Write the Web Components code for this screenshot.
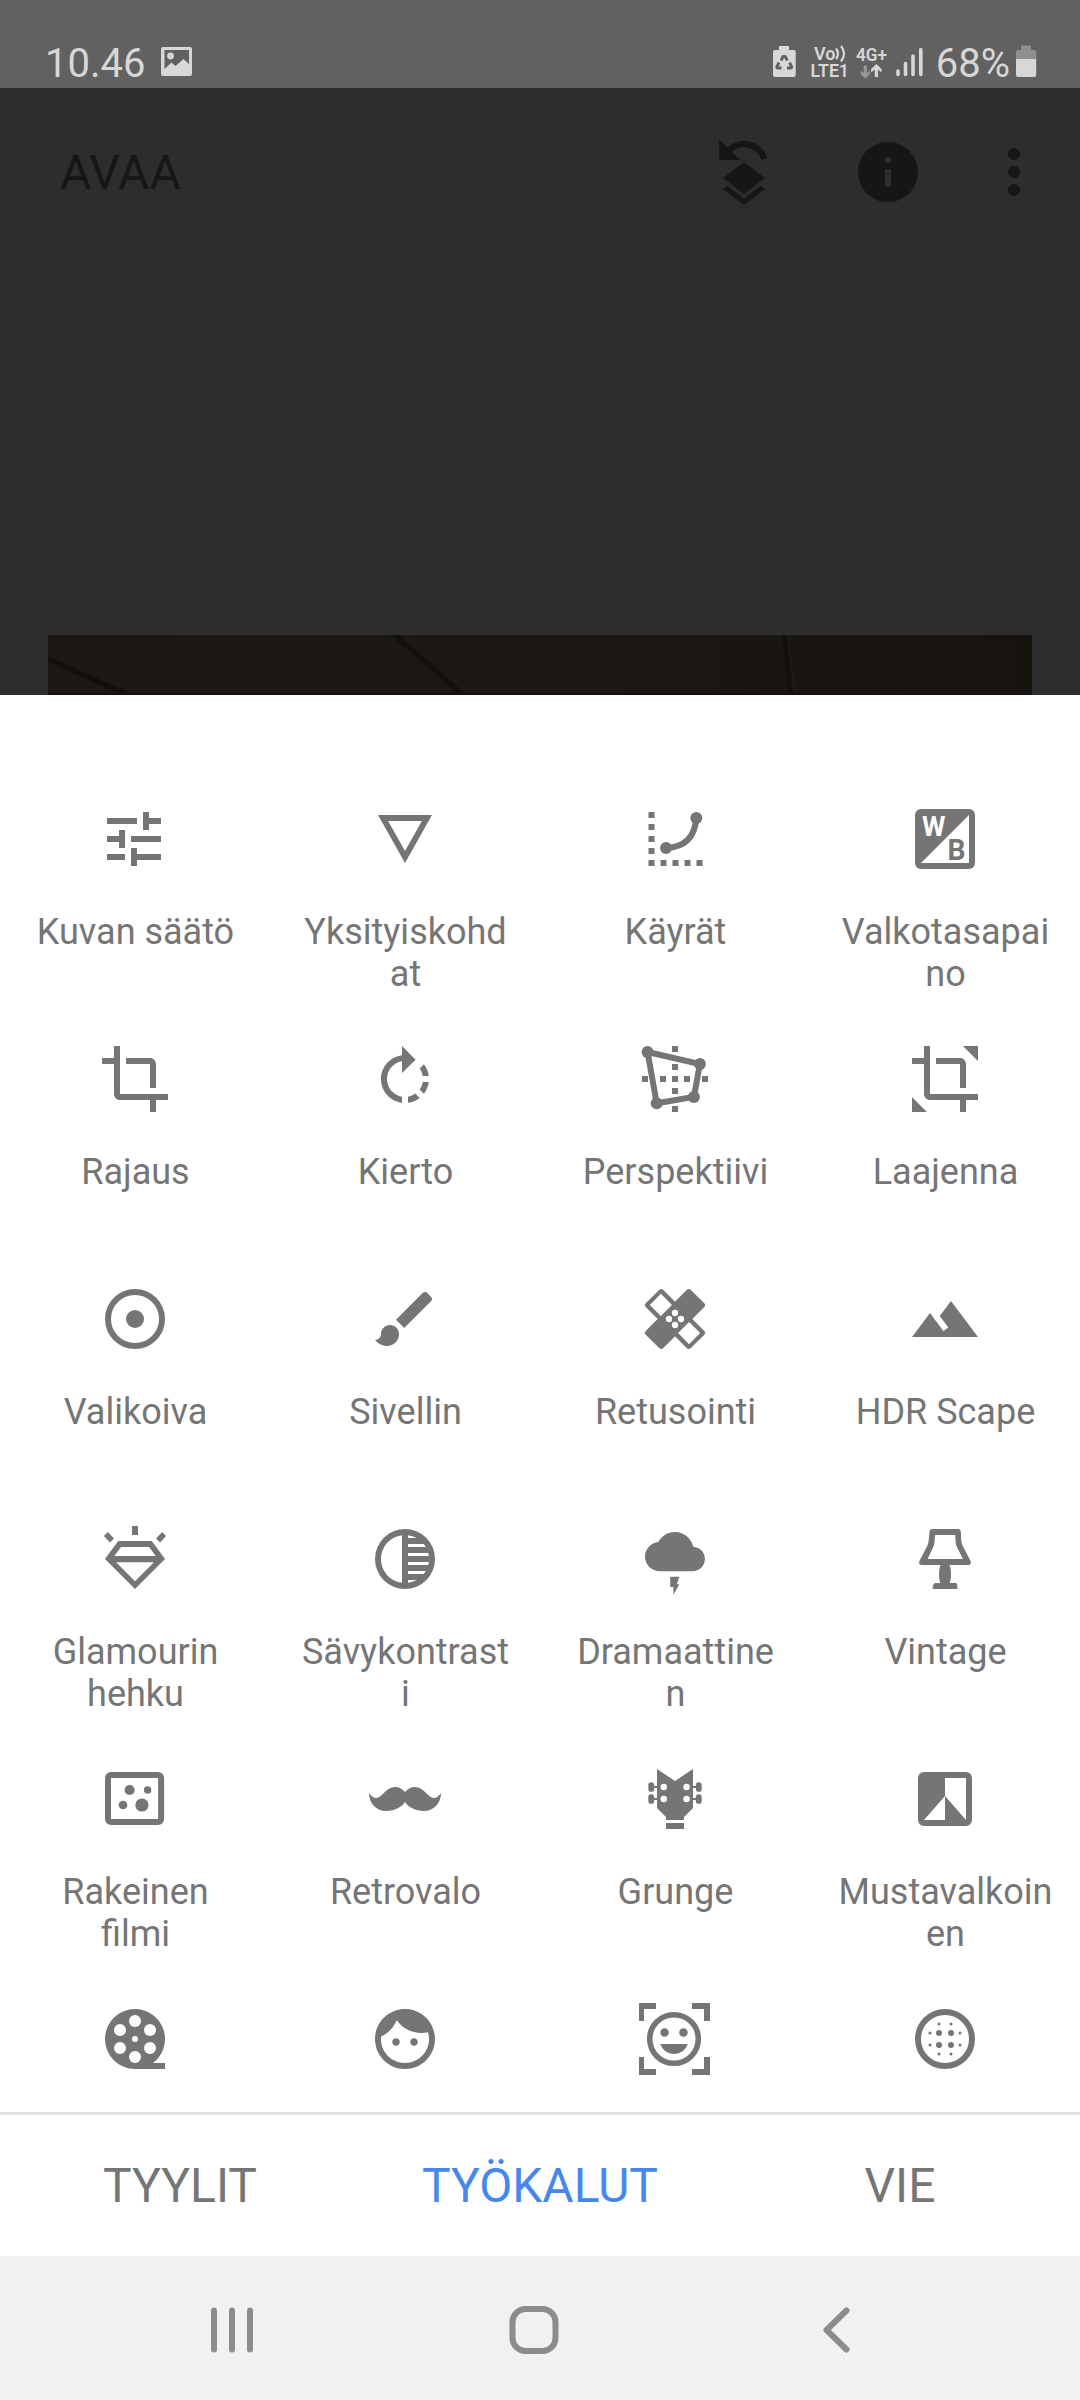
<!DOCTYPE html>
<html lang="fi">
<head>
<meta charset="utf-8">
<title>Työkalut</title>
<style>
html,body{margin:0;padding:0}
body{width:1080px;height:2400px;overflow:hidden;background:#2d2d2d;font-family:Roboto,"Noto Sans",sans-serif}
</style>
</head>
<body>
<editor-screen></editor-screen>
<script>
const define = (name, css, html) => customElements.define(name, class extends HTMLElement {
  constructor() {
    super();
    this.attachShadow({ mode: 'open' }).innerHTML = `<style>${css}</style>${html}`;
  }
});

const CROP = '<path d="M17 15h2V7c0-1.1-.9-2-2-2H9v2h8v8zM7 17V1H5v4H1v2h4v10c0 1.1.9 2 2 2h10v4h2v-4h4v-2H7z"/>';
const dots = (list, r) => list.map(([x, y]) => `<circle cx="${x}" cy="${y}" r="${r}"/>`).join('');
const squares = list => list.map(([x, y]) => `<rect x="${x}" y="${y}" width="2" height="2"/>`).join('');

const ICONS = {
  tune: '<path transform="translate(-.33 0)" d="M3 17v2h6v-2H3zM3 5v2h10V5H3zm10 16v-2h8v-2h-8v-2h-2v6h2zM7 9v2H3v2h4v2h2V9H7zm14 4v-2H11v2h10zm-6-4h2V7h4V5h-4V3h-2v6z"/>',
  details: '<path d="M3 4l9 16 9-16H3zm3.38 2h11.25L12 16 6.38 6z"/>',
  curves: '<g transform="translate(.17 0)">' + squares([[3,3],[3,7],[3,11],[3,15],[3,19],[7,19],[11,19],[15,19],[19,19]]) + '</g>' + dots([[19.1,5],[9,15]], 2) + '<path d="M9 15Q18.4 14.6 19.1 5" fill="none" stroke="currentColor" stroke-width="2"/>',
  wb: '<rect x="2" y="2" width="20" height="20" rx="2"/><path d="M20 4v16H4z" fill="#fff"/><text x="4.3" y="11" font-size="9.1" font-weight="700" textLength="7.8" lengthAdjust="spacingAndGlyphs" fill="#fff">W</text><text x="12.8" y="19" font-size="9.8" font-weight="700" textLength="6" lengthAdjust="spacingAndGlyphs">B</text>',
  crop: CROP,
  rotate: '<path d="M15.55 5.55L11 1v3.07C7.06 4.56 4 7.92 4 12s3.05 7.44 7 7.93v-2.02c-2.84-.48-5-2.94-5-5.91s2.16-5.43 5-5.91V10l4.55-4.45zM19.93 11c-.17-1.39-.72-2.73-1.62-3.89l-1.42 1.42c.54.75.88 1.6 1.02 2.47h2.02zM13 17.9v2.02c1.39-.17 2.74-.71 3.9-1.61l-1.44-1.44c-.75.54-1.59.89-2.46 1.03zm3.89-2.42l1.42 1.41c.9-1.16 1.45-2.5 1.62-3.89h-2.02c-.14.87-.48 1.72-1.02 2.48z"/>',
  perspective: squares([[11,1],[11,7],[11,11],[11,15],[11,21],[1,11],[7,11],[15,11],[21,11]]) + dots([[2.85,3],[20.3,7],[18.3,18],[5.9,20.1]], 2) + '<path d="M2.85 3L20.3 7 18.3 18 5.9 20.1z" fill="none" stroke="currentColor" stroke-width="2"/>',
  expand: CROP + '<path d="M18 1h5v5zM1 18l5 5H1z"/>',
  selective: '<circle cx="12" cy="12" r="9" fill="none" stroke="currentColor" stroke-width="2"/><circle cx="12" cy="12" r="3"/>',
  brush: '<path d="M7 14c-1.66 0-3 1.34-3 3 0 1.31-1.16 2-2 2 .92 1.22 2.49 2 4 2 2.21 0 4-1.79 4-4 0-1.66-1.34-3-3-3zm13.71-9.37l-1.34-1.34c-.39-.39-1.02-.39-1.41 0L9 12.25 11.75 15l8.96-8.96c.39-.39.39-1.02 0-1.41z"/>',
  healing: '<g transform="rotate(45 12 12)"><rect x="1.4" y="7.9" width="21.2" height="8.2" rx="1"/><rect x="7.9" y="1.4" width="8.2" height="21.2" rx="1"/><path d="M2.75 9.4h5.2v5.2h-5.2zM16.05 9.4h5.2v5.2h-5.2z" fill="#fff"/></g><g fill="#fff">' + dots([[12,10],[10,12],[14,12],[12,14]], 1.05) + '</g>',
  hdr: '<path d="M14 6l-3.75 5 2.85 3.8-1.6 1.2C9.81 13.75 7 10 7 10l-6 8h22L14 6z"/>',
  glamour: '<path fill-rule="evenodd" d="M11 1h2v3h-2zM1.65 4.35L2.95 3 5 5.2 3.65 6.5zM22.35 4.35L21.05 3 19 5.2l1.35 1.3zM6.4 6h11.2L22 12 12 22 2 12zM7.35 8L5.1 11h13.8l-2.2-3zM5.7 13.1l6.3 6.3 6.3-6.3z"/>',
  tonal: '<path fill-rule="evenodd" d="M12 2a10 10 0 1 0 0 20 10 10 0 0 0 0-20zM11 4.06v15.88A8 8 0 0 1 11 4.06zM13 4.06A8 8 0 0 1 15.87 5H13zM13 7h5.24A8 8 0 0 1 18.93 8H13zM13 10h6.75l.19 1H13zM13 13h6.94l-.19 1H13zM13 16h5.93a8 8 0 0 1-.69 1H13zM13 19h2.87a8 8 0 0 1-2.87.94z"/>',
  drama: '<path transform="translate(2 -.28) scale(.832 .82)" d="M19.35 10.04C18.67 6.59 15.64 4 12 4 9.11 4 6.6 5.64 5.35 8.04 2.34 8.36 0 10.91 0 14c0 3.31 2.69 6 6 6h13c2.76 0 5-2.24 5-5 0-2.64-2.05-4.78-4.65-4.96z"/><path d="M10.4 17.9h3.05l-.85 2.5h.85l-2 3.5v-2.6H10.4z"/>',
  vintage: '<path fill-rule="evenodd" d="M7.7 2h8.7q.8 0 .85.8l.2 3.1q.1 1.1.6 2l2.4 4.6q.6 1.2-.6 1.5H13.5q.5 1.2.5 3 0 1.900-.4 3H15.500q.7 0 .6 1.2v.8H7.9q0-2 .9-2h1.6q-.4-1.200-.4-3t.5-3H4.150q-1.200-.3-.6-1.500L5.950 7.900q.5-.9.6-2l.3-3.100Q6.900 2 7.700 2zM8.700 4l-.2 2.500q-.1.900-.5 1.700L6.200 12h11.800l-1.950-3.800q-.4-.8-.5-1.700L15.400 4z"/>',
  grain: '<path fill-rule="evenodd" d="M4 3h15.700a2 2 0 0 1 2 2v13.700a2 2 0 0 1-2 2H4a2 2 0 0 1-2-2V5a2 2 0 0 1 2-2zM4 5v13.650h15.700V5z"/><circle cx="10.200" cy="9" r="1.700"/><circle cx="16.200" cy="9" r="1.250"/><circle cx="8" cy="14" r="1.450"/><circle cx="14.300" cy="14" r="2.200"/>',
  moustache: '<path d="M12 9.700C11.200 8.700 10.100 8 8.700 8 5.600 8 4.300 11.700 2.500 11.700 1.500 11.700.7 11 0 10 0 13.500 2.500 16 5.700 16 8.500 16 11 14.600 12 13 13 14.600 15.500 16 18.300 16 21.500 16 24 13.500 24 10 23.300 11 22.500 11.700 21.500 11.700 19.700 11.700 18.400 8 15.300 8 13.900 8 12.800 8.700 12 9.700z"/>',
  grunge: '<path d="M6 2l6 4 6-4v13l-3 3v1H9v-1l-3-3zM9 20h6v2H9zM4.500 7.650h15v.7h-15zM4.500 11.650h15v.7h-15z"/>' + [[3.100,6.400],[3.100,10.400],[18.950,6.400],[18.950,10.400]].map(([x,y]) => `<rect x="${x}" y="${y}" width="1.950" height="3.200" rx=".95"/>`).join('') + '<g fill="#fff">' + dots([[8.250,8],[8.250,12],[15.850,8],[15.850,12]], 1.080) + '</g>',
  mono: '<path fill-rule="evenodd" d="M5 3h14a2 2 0 0 1 2 2v14a2 2 0 0 1-2 2H5a2 2 0 0 1-2-2V5a2 2 0 0 1 2-2zM12 5v6l7 8V5zM12 11l-7 8h7z"/>',
  reel: '<path d="M12 2a10 10 0 0 0 0 20h10v-2h-4A10 10 0 0 0 12 2z"/><g fill="#fff">' + dots([[12,6],[7,9],[17,9],[7,15],[17,15],[12,18]], 2) + dots([[12,12]], 1) + '</g>',
  face: '<path d="M9 11.75c-.69 0-1.25.56-1.25 1.25s.56 1.25 1.25 1.25 1.25-.56 1.25-1.25-.56-1.25-1.25-1.25zm6 0c-.69 0-1.25.56-1.25 1.25s.56 1.25 1.25 1.25 1.25-.56 1.25-1.25-.56-1.25-1.25-1.25zM12 2C6.480 2 2 6.480 2 12s4.480 10 10 10 10-4.480 10-10S17.520 2 12 2zm0 18c-4.410 0-8-3.590-8-8 0-.29.02-.58.05-.86 2.360-1.050 4.230-2.980 5.210-5.370C11.070 8.330 14.050 10 17.420 10c.78 0 1.530-.09 2.250-.26.21.71.33 1.470.33 2.260 0 4.410-3.590 8-8 8z"/>',
  pose: '<g transform="translate(-.33 0)"><path d="M0 0h6v2H2v4H0zM18 0h6v6h-2V2h-4zM0 18h2v4h4v2H0zM22 18h2v6h-6v-2h4zM7.400 13.700h9.200q-1.200 3.300-4.600 3.300t-4.600-3.300z"/><circle cx="12" cy="12" r="8.100" fill="none" stroke="currentColor" stroke-width="1.850"/>' + dots([[8.850,9.800],[15.150,9.800]], 1.420) + '</g>',
  blur: '<circle cx="12" cy="12" r="9" fill="none" stroke="currentColor" stroke-width="2"/>' + dots([[10,10],[14,10],[10,14],[14,14]], 1) + dots([[10,7],[14,7],[7,10],[17,10],[7,14],[17,14],[10,17],[14,17]], .5),
  undoLayers: '<path d="M6.600 3.800C8 2.500 9.900 1.670 12 1.670c3.600 0 6.600 2.300 7.800 5.670l-2 .66C16.900 5.500 14.700 3.670 12 3.670c-1.500 0-2.900.6-4 1.550L10.900 8H3.730V1zM12 8.670L19 14l-7 5.330L5 14zM5 17.600l1.400-1 5.600 4.300 5.600-4.300 1.400 1L12 23z"/>',
  info: '<path d="M12 2C6.480 2 2 6.480 2 12s4.480 10 10 10 10-4.480 10-10S17.520 2 12 2zm1 15h-2v-6h2v6zm0-8h-2V7h2v2z"/>',
  more: dots([[12,6],[12,12],[12,18]], 2)
};

customElements.define('ui-icon', class extends HTMLElement {
  constructor() { super(); this.attachShadow({ mode: 'open' }); }
  connectedCallback() {
    this.shadowRoot.innerHTML = `<style>:host{display:block;width:72px;height:72px;flex:none}svg{display:block}</style>
      <svg width="72" height="72" viewBox="0 0 24 24" fill="currentColor">${ICONS[this.getAttribute('name')]}</svg>`;
  }
});

define('status-bar', `
  :host{display:flex;align-items:flex-start;justify-content:space-between;height:88px;box-sizing:border-box;padding:38px 43px 0 45px;background:#616161;color:#d7d7d7;font-size:40px;line-height:50px}
  div{display:flex;align-items:flex-start}
  svg{display:block;flex:none}
  span{padding-top:1px}
  .left{gap:16px}
`, `
  <div class="left"><span>10.46</span>
    <svg width="32" height="50" viewBox="0 38 32 50" fill="#d7d7d7"><path fill-rule="evenodd" d="M2 47h27q2 0 2 2v25q0 2-2 2H2q-2 0-2-2V49q0-2 2-2zM3.500 50v19l7-6.500 4 3.500 8-7 5.500 5v-14z"/><circle cx="9.500" cy="56" r="3.400"/></svg>
  </div>
  <div class="right">
    <svg width="163" height="50" viewBox="773 38 163 50" fill="#d7d7d7">
      <path d="M779 46h10v4h5q1.700 0 1.700 2v23q0 2-2 2H775q-2 0-2-2V52q0-2 2-2h4z"/>
      <g fill="none" stroke="#616161" stroke-width="2.800" stroke-linejoin="round"><path d="M781 60.500l2-4h2.200l2.200 4M779 62.500l-2.300 4.500q0 1 1 1h3.800M789.500 62.500l2.300 4.500q0 1-1 1h-3.800"/></g><path d="M783.200 63h2v7h-2z"/><path d="M780.700 65.500l3.500-3.500 3.500 3.500z"/>
      <text x="814" y="60" font-size="18" font-weight="600" textLength="21.500" lengthAdjust="spacingAndGlyphs">Vo</text>
      <g fill="none" stroke="#d7d7d7" stroke-width="2.200"><path d="M836 48.500q4 5 0 10.500M841 46q6 7.500 0 15.500"/></g>
      <text x="810.500" y="76.500" font-size="18.500" font-weight="600" textLength="38.500" lengthAdjust="spacingAndGlyphs">LTE1</text>
      <text x="856" y="60.500" font-size="18" font-weight="600" textLength="31" lengthAdjust="spacingAndGlyphs">4G+</text>
      <path d="M863.700 65.500h3.200v7.500l3-2.500v3.500l-4.600 4.800-4.700-4.800v-3.500l3.100 2.500z" fill="#969696"/>
      <path d="M874.800 77h3.200v-7.500l3.600 3v-3.600l-5.200-5-5.300 5v3.600l3.700-3z"/>
      <g stroke="#d7d7d7" stroke-width="3.600" stroke-linecap="round"><path d="M898 71v3.500M905.500 63.500v11M913 56v18.500M920.800 49.500v25"/></g>
    </svg>
    <span>68%</span>
    <svg width="27" height="50" viewBox="1010 38 27 50"><path d="M1021 45.500h10V50h3.500q1.700 0 1.700 2v8H1016v-8q0-2 1.700-2h3.300z" fill="#8f8f8f"/><path d="M1016 59h20.200v16q0 2-2 2h-16.200q-2 0-2-2z" fill="#d7d7d7"/></svg>
  </div>`);

define('app-bar', `
  :host{display:flex;align-items:center;height:168px;box-sizing:border-box;padding:0 30px 0 60px;color:#161616;font-size:48px;line-height:56px}
  span{flex:1;padding-top:2px}
  .actions{display:flex;gap:72px}
  .more{margin-left:54px}
`, `<span>AVAA</span><div class="actions"><ui-icon name="undoLayers"></ui-icon><ui-icon name="info"></ui-icon></div><ui-icon class="more" name="more"></ui-icon>`);

define('photo-canvas', `
  :host{display:block;height:60px;margin:379px 48px 0}
  svg{display:block}
`, `<svg width="984" height="60" viewBox="48 635 984 60">
    <defs><linearGradient id="wood"><stop offset="0" stop-color="#1c1714"/><stop offset=".5" stop-color="#1b1813"/><stop offset="1" stop-color="#17130f"/></linearGradient></defs>
    <path d="M48 635h984v60H48z" fill="url(#wood)"/>
    <g fill="none" stroke="#13100c" stroke-width="5"><path d="M46 658L135 698M391 632l76 66M784 632l7 66"/></g>
    <path d="M788 635l7 60" stroke="#1e1a15" stroke-width="2"/>
    <path d="M48 693h984v2H48z" fill="#15110f"/>
  </svg>`);

const TOOLS = [
  ['tune','Kuvan säätö'],['details','Yksityiskohd<br>at'],['curves','Käyrät'],['wb','Valkotasapai<br>no'],
  ['crop','Rajaus'],['rotate','Kierto'],['perspective','Perspektiivi'],['expand','Laajenna'],
  ['selective','Valikoiva'],['brush','Sivellin'],['healing','Retusointi'],['hdr','HDR Scape'],
  ['glamour','Glamourin<br>hehku'],['tonal','Sävykontrast<br>i'],['drama','Dramaattine<br>n'],['vintage','Vintage'],
  ['grain','Rakeinen<br>filmi'],['moustache','Retrovalo'],['grunge','Grunge'],['mono','Mustavalkoin<br>en'],
  ['reel',''],['face',''],['pose',''],['blur','']
];

customElements.define('tool-cell', class extends HTMLElement {
  constructor() { super(); this.attachShadow({ mode: 'open' }); }
  connectedCallback() {
    this.shadowRoot.innerHTML = `<style>
      :host{display:flex;flex-direction:column;align-items:center;gap:36px;color:#757575;font-size:36px;line-height:42px;text-align:center;white-space:nowrap}
      div{padding-left:1px}
      </style><ui-icon name="${this.getAttribute('icon')}"></ui-icon><div><slot></slot></div>`;
  }
});

define('tool-sheet', `
  :host{display:grid;grid-template-columns:repeat(4,270px);grid-auto-rows:240px;height:1417px;box-sizing:border-box;padding-top:108px;background:#fff;overflow:hidden}
`, TOOLS.map(([icon, label]) => `<tool-cell icon="${icon}">${label}</tool-cell>`).join(''));

define('sheet-tabs', `
  :host{display:grid;grid-template-columns:repeat(3,1fr);align-items:center;height:144px;box-sizing:border-box;border-top:3px solid #e0e0e0;background:#fff;color:#757575;font-size:48px;line-height:56px;text-align:center}
  .on{color:#4787ed}
`, `<span>TYYLIT</span><span class="on">TYÖKALUT</span><span>VIE</span>`);

define('nav-bar', `
  :host{display:flex;align-items:center;height:144px;background:#f1f1f1}
  svg{display:block;flex:none}
`, `<svg width="1080" height="144" viewBox="0 2256 1080 144" fill="none" stroke="#8c8c8c" stroke-width="6" stroke-linecap="round">
    <path d="M214 2310.500v39M232 2310.500v39M250 2310.500v39"/>
    <rect x="512.500" y="2309" width="43" height="42" rx="13"/>
    <path d="M846.500 2310.500L826.500 2330l20 19.500" stroke-linejoin="round"/>
  </svg>`);

define('editor-screen', `:host{display:flex;flex-direction:column;width:1080px;height:2400px;background:#2d2d2d}`,
  `<status-bar></status-bar><app-bar></app-bar><photo-canvas></photo-canvas><tool-sheet></tool-sheet><sheet-tabs></sheet-tabs><nav-bar></nav-bar>`);
</script>
</body>
</html>
